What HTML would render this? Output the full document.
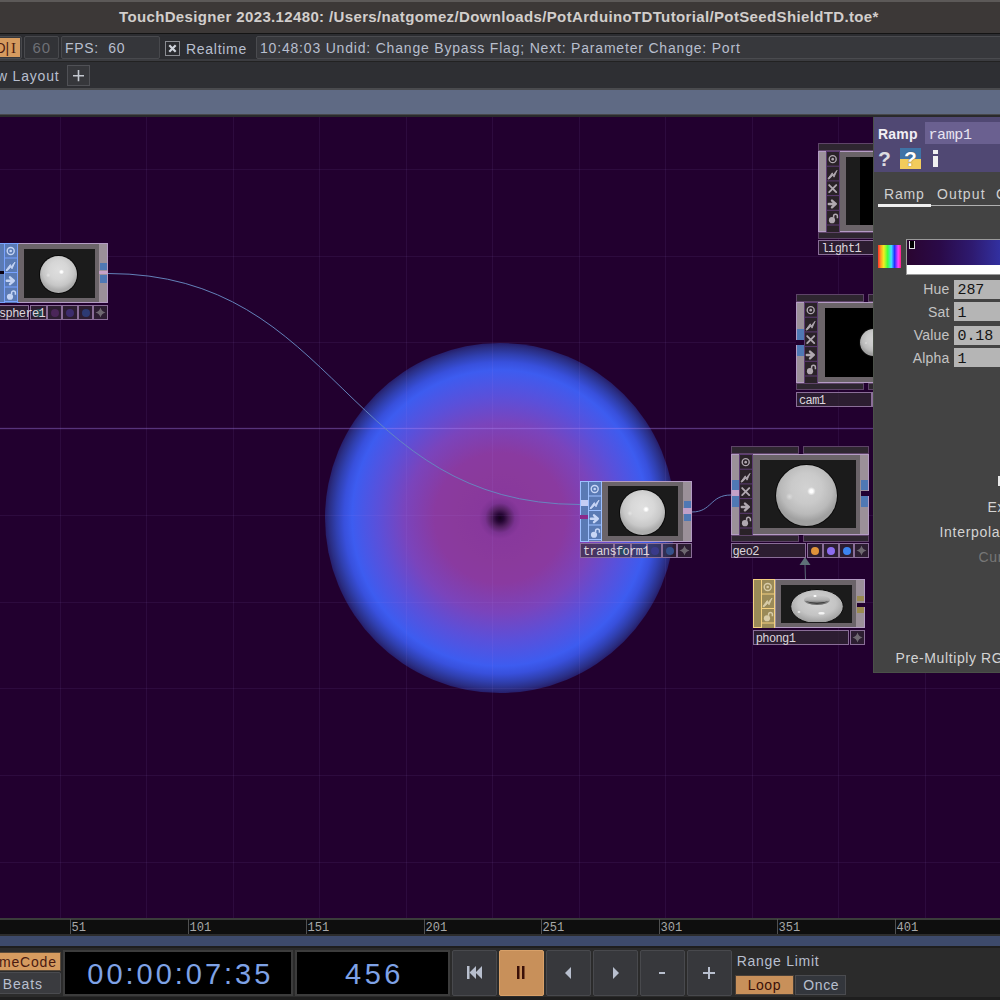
<!DOCTYPE html>
<html><head><meta charset="utf-8">
<style>
*{box-sizing:border-box;margin:0;padding:0}
html,body{width:1000px;height:1000px;overflow:hidden;background:#22002f;font-family:"Liberation Sans",sans-serif}
.a{position:absolute}
.t{white-space:pre;line-height:1}
.m{font-family:"Liberation Mono",monospace}
svg{position:absolute;left:0;top:0;overflow:visible}
</style></head><body>

<div class="a" style="left:325px;top:342.70000000000005px;width:350px;height:350px;border-radius:50%;background:radial-gradient(circle closest-side, #14021c 0px, #260634 4px, #50205e 9px, #7a3290 15px, #88389c 21px, #8a3a9c 45px, #8a3aa0 65px, #7a44bc 95px, #5a50da 122px, #3d5cf0 148px, #3850dc 156px, #3040b0 164px, #2a2e84 171px, #261e6a 175px)"></div>
<svg width="1000" height="1000"><rect x="60" y="117" width="1" height="801" fill="rgba(190,150,255,0.075)"/><rect x="146" y="117" width="1" height="801" fill="rgba(190,150,255,0.075)"/><rect x="233" y="117" width="1" height="801" fill="rgba(190,150,255,0.075)"/><rect x="319" y="117" width="1" height="801" fill="rgba(190,150,255,0.075)"/><rect x="406" y="117" width="1" height="801" fill="rgba(190,150,255,0.075)"/><rect x="492" y="117" width="1" height="801" fill="rgba(190,150,255,0.075)"/><rect x="579" y="117" width="1" height="801" fill="rgba(190,150,255,0.075)"/><rect x="665" y="117" width="1" height="801" fill="rgba(190,150,255,0.075)"/><rect x="752" y="117" width="1" height="801" fill="rgba(190,150,255,0.075)"/><rect x="838" y="117" width="1" height="801" fill="rgba(190,150,255,0.075)"/><rect x="925" y="117" width="1" height="801" fill="rgba(190,150,255,0.075)"/><rect x="0" y="169" width="1000" height="1" fill="rgba(190,150,255,0.075)"/><rect x="0" y="256" width="1000" height="1" fill="rgba(190,150,255,0.075)"/><rect x="0" y="342" width="1000" height="1" fill="rgba(190,150,255,0.075)"/><rect x="0" y="515" width="1000" height="1" fill="rgba(190,150,255,0.075)"/><rect x="0" y="602" width="1000" height="1" fill="rgba(190,150,255,0.075)"/><rect x="0" y="688" width="1000" height="1" fill="rgba(190,150,255,0.075)"/><rect x="0" y="775" width="1000" height="1" fill="rgba(190,150,255,0.075)"/><rect x="0" y="862" width="1000" height="1" fill="rgba(190,150,255,0.075)"/><rect x="0" y="428" width="1000" height="1" fill="rgba(175,135,250,0.34)"/><rect x="0" y="427" width="1000" height="3" fill="rgba(170,130,240,0.06)"/><path d="M108 273.5 C 340 273.5, 345 504.5, 580 504.5" stroke="#6688c0" stroke-width="0.95" fill="none"/><path d="M692 512 C 712 512, 710 495, 731 495" stroke="#6688c0" stroke-width="0.95" fill="none"/><path d="M805.5 580 L805 565" stroke="#5a6a78" stroke-width="1" fill="none"/><path d="M799.5 565 L810.5 565 L805 557 Z" fill="#5e7078"/></svg>
<div class="a" style="left:-30px;top:243px;width:138px;height:60px;background:#9b9099;border:1px solid #b49cc4"></div>
<div class="a" style="left:-30px;top:243px;width:35px;height:60px;background:#5a7ab4;border:1px solid #78a2ff"></div>
<div class="a" style="left:4px;top:243px;width:15px;height:60px;background:#5a7ab4;border:1px solid #78a2ff"></div>
<div class="a" style="left:-2px;top:271px;width:6px;height:3px;background:#0a0010"></div>
<div class="a" style="left:4px;top:243px;width:14px;height:60.0px;background:#5a7ab4;border-left:1px solid #78a2ff;border-right:1px solid #78a2ff"></div>
<svg width="1000" height="1000"><rect x="4" y="243.0" width="14" height="1" fill="#78a2ff"/><circle cx="10.7" cy="251.05" r="3.5" stroke="#c4d4f4" stroke-width="1.4" fill="none"/><circle cx="10.7" cy="251.05" r="1.3" fill="#c4d4f4"/><rect x="4" y="257.5" width="14" height="1" fill="#78a2ff"/><path d="M6 270.25 L10.3 264.55 L11 266.85 L15 262.05 L12 268.85 L11.2 266.65 L7 270.85 Z" fill="#c4d4f4" stroke="#c4d4f4" stroke-width="0.9" stroke-linejoin="round"/><rect x="4" y="272.0" width="14" height="1" fill="#78a2ff"/><path d="M6.8 280.75 L12.5 280.75 M10 277.35 L13.8 280.75 L10 284.15" stroke="#c4d4f4" stroke-width="2.4" stroke-linecap="round" stroke-linejoin="round" fill="none"/><rect x="4" y="286.5" width="14" height="1" fill="#78a2ff"/><circle cx="10" cy="296.75" r="3.1" fill="#c4d4f4"/><path d="M11.6 294.25 L11.6 292.85 A1.9 1.9 0 0 1 15.4 292.85 L15.4 294.85" stroke="#c4d4f4" stroke-width="1.5" fill="none"/><rect x="4" y="301.0" width="14" height="1" fill="#78a2ff"/></svg>
<div class="a" style="left:18px;top:244px;width:81px;height:58px;background:#6b6469"></div>
<div class="a" style="left:24px;top:249px;width:71px;height:49px;background:#1b1b1b"></div>
<div class="a" style="left:39.6px;top:255.50000000000003px;width:37.2px;height:37.2px;border-radius:50%;box-shadow:0 0 0 1px #0a0a0a;background:radial-gradient(circle at 58% 43%, #ffffff 0, #ffffff 0.9300000000000002px, rgba(255,255,255,0) 2.6040000000000005px),radial-gradient(circle at 22% 52%, rgba(255,255,255,0.4) 0, rgba(255,255,255,0) 2.232px),radial-gradient(circle at 50% 38%, #dedede 0, #d6d6d6 9.3px, #c6c6c6 15.81px, #acacac 20.088000000000005px)"></div>
<div class="a" style="left:100px;top:263px;width:7px;height:7px;background:#4f78b4"></div>
<div class="a" style="left:100px;top:275px;width:7px;height:8px;background:#4f78b4"></div>
<div class="a" style="left:99px;top:271px;width:9px;height:3px;background:#c7a2c9"></div>
<div class="a" style="left:-10px;top:305px;width:39px;height:15px;background:rgba(50,44,50,0.66);border:1px solid #8a6e98"></div>
<div class="a" style="left:30px;top:305px;width:17px;height:15px;background:rgba(50,44,50,0.66);border:1px solid #8a6e98"></div>
<div class="a" style="left:34.5px;top:308.5px;width:8px;height:8px;border-radius:50%;background:#244850"></div>
<div class="a" style="left:47px;top:305px;width:15px;height:15px;background:rgba(50,44,50,0.66);border:1px solid #8a6e98"></div>
<div class="a" style="left:50.5px;top:308.5px;width:8px;height:8px;border-radius:50%;background:#4a2658"></div>
<div class="a" style="left:62px;top:305px;width:16px;height:15px;background:rgba(50,44,50,0.66);border:1px solid #8a6e98"></div>
<div class="a" style="left:66.0px;top:308.5px;width:8px;height:8px;border-radius:50%;background:#3c2c6c"></div>
<div class="a" style="left:78px;top:305px;width:15px;height:15px;background:rgba(50,44,50,0.66);border:1px solid #8a6e98"></div>
<div class="a" style="left:81.5px;top:308.5px;width:8px;height:8px;border-radius:50%;background:#2c3a72"></div>
<div class="a" style="left:93px;top:305px;width:15px;height:15px;background:rgba(50,44,50,0.66);border:1px solid #8a6e98"></div>
<svg width="1000" height="1000"><path d="M100.5 307.5 Q101.5 311.5 105.5 312.5 Q101.5 313.5 100.5 317.5 Q99.5 313.5 95.5 312.5 Q99.5 311.5 100.5 307.5 Z" fill="#6e6870"/></svg>
<div class="a" style="left:580px;top:481px;width:112px;height:61px;background:#9b9099;border:1px solid #b49cc4"></div>
<div class="a" style="left:580px;top:481px;width:9px;height:61px;background:#5a7ab4;border:1px solid #9ec0ff"></div>
<div class="a" style="left:581px;top:500px;width:7px;height:6px;background:#c4cdf4"></div>
<div class="a" style="left:580px;top:515px;width:9px;height:4px;background:#8a2a8a"></div>
<div class="a" style="left:588px;top:481px;width:14px;height:60.0px;background:#5a7ab4;border-left:1px solid #9ec0ff;border-right:1px solid #9ec0ff"></div>
<svg width="1000" height="1000"><rect x="588" y="481.0" width="14" height="1" fill="#9ec0ff"/><circle cx="594.7" cy="489.05" r="3.5" stroke="#c8d6f6" stroke-width="1.4" fill="none"/><circle cx="594.7" cy="489.05" r="1.3" fill="#c8d6f6"/><rect x="588" y="495.5" width="14" height="1" fill="#9ec0ff"/><path d="M590 508.25 L594.3 502.55 L595 504.85 L599 500.05 L596 506.85 L595.2 504.65 L591 508.85 Z" fill="#c8d6f6" stroke="#c8d6f6" stroke-width="0.9" stroke-linejoin="round"/><rect x="588" y="510.0" width="14" height="1" fill="#9ec0ff"/><path d="M590.8 518.75 L596.5 518.75 M594 515.35 L597.8 518.75 L594 522.15" stroke="#c8d6f6" stroke-width="2.4" stroke-linecap="round" stroke-linejoin="round" fill="none"/><rect x="588" y="524.5" width="14" height="1" fill="#9ec0ff"/><circle cx="594" cy="534.75" r="3.1" fill="#c8d6f6"/><path d="M595.6 532.25 L595.6 530.85 A1.9 1.9 0 0 1 599.4 530.85 L599.4 532.85" stroke="#c8d6f6" stroke-width="1.5" fill="none"/><rect x="588" y="539.0" width="14" height="1" fill="#9ec0ff"/></svg>
<div class="a" style="left:602px;top:482px;width:81px;height:59px;background:#6b6469"></div>
<div class="a" style="left:608px;top:486px;width:70px;height:50px;background:#1b1b1b"></div>
<div class="a" style="left:619.7px;top:489.70000000000005px;width:45.0px;height:45.0px;border-radius:50%;box-shadow:0 0 0 1px #0a0a0a;background:radial-gradient(circle at 58% 43%, #ffffff 0, #ffffff 1.125px, rgba(255,255,255,0) 3.1500000000000004px),radial-gradient(circle at 22% 52%, rgba(255,255,255,0.4) 0, rgba(255,255,255,0) 2.6999999999999997px),radial-gradient(circle at 50% 38%, #e0e0e0 0, #d8d8d8 11.25px, #c8c8c8 19.125px, #aeaeae 24.3px)"></div>
<div class="a" style="left:684px;top:501px;width:7px;height:7px;background:#4f78b4"></div>
<div class="a" style="left:683px;top:508px;width:9px;height:6px;background:#c0a0c8"></div>
<div class="a" style="left:684px;top:514px;width:7px;height:7px;background:#4f78b4"></div>
<div class="a" style="left:580px;top:543px;width:34px;height:15px;background:rgba(50,44,50,0.66);border:1px solid #8a6e98"></div>
<div class="a" style="left:614px;top:543px;width:17px;height:15px;background:rgba(50,44,50,0.66);border:1px solid #8a6e98"></div>
<div class="a" style="left:618.5px;top:546.5px;width:8px;height:8px;border-radius:50%;background:#2a4a62"></div>
<div class="a" style="left:631px;top:543px;width:16px;height:15px;background:rgba(50,44,50,0.66);border:1px solid #8a6e98"></div>
<div class="a" style="left:635.0px;top:546.5px;width:8px;height:8px;border-radius:50%;background:#3a3270"></div>
<div class="a" style="left:647px;top:543px;width:15px;height:15px;background:rgba(50,44,50,0.66);border:1px solid #8a6e98"></div>
<div class="a" style="left:650.5px;top:546.5px;width:8px;height:8px;border-radius:50%;background:#3a3a8a"></div>
<div class="a" style="left:662px;top:543px;width:15px;height:15px;background:rgba(50,44,50,0.66);border:1px solid #8a6e98"></div>
<div class="a" style="left:665.5px;top:546.5px;width:8px;height:8px;border-radius:50%;background:#34508a"></div>
<div class="a" style="left:677px;top:543px;width:15px;height:15px;background:rgba(50,44,50,0.66);border:1px solid #8a6e98"></div>
<svg width="1000" height="1000"><path d="M684.5 545.5 Q685.5 549.5 689.5 550.5 Q685.5 551.5 684.5 555.5 Q683.5 551.5 679.5 550.5 Q683.5 549.5 684.5 545.5 Z" fill="#6e6870"/></svg>
<div class="a t" style="left:-1px;top:308px;font-family:Liberation Mono;font-size:12px;letter-spacing:-0.6px;color:#ddd6dd">sphere1</div>
<div class="a t" style="left:583px;top:546px;font-family:Liberation Mono;font-size:12px;letter-spacing:-0.6px;color:#ddd6dd">transform1</div>
<div class="a" style="left:731px;top:446px;width:68px;height:8px;background:#2e2630;border:1px solid #5e4468"></div>
<div class="a" style="left:803px;top:446px;width:66px;height:8px;background:#2e2630;border:1px solid #5e4468"></div>
<div class="a" style="left:731px;top:535px;width:68px;height:7px;background:#2e2630;border:1px solid #5e4468"></div>
<div class="a" style="left:803px;top:535px;width:66px;height:7px;background:#2e2630;border:1px solid #5e4468"></div>
<div class="a" style="left:731px;top:454px;width:138px;height:81px;background:#9b9099;border:1px solid #b49cc4"></div>
<div class="a" style="left:732px;top:480px;width:7px;height:10px;background:#4f78b4"></div>
<div class="a" style="left:732px;top:490px;width:7px;height:6px;background:#c4a0c8"></div>
<div class="a" style="left:732px;top:496px;width:7px;height:11px;background:#4f78b4"></div>
<div class="a" style="left:739px;top:454px;width:14px;height:80.5px;background:#2a2228;border-left:1px solid #5c3c72;border-right:1px solid #5c3c72"></div>
<svg width="1000" height="1000"><rect x="739" y="454.0" width="14" height="1" fill="#5c3c72"/><circle cx="745.7" cy="462.15000000000003" r="3.5" stroke="#b0a8b0" stroke-width="1.4" fill="none"/><circle cx="745.7" cy="462.15000000000003" r="1.3" fill="#b0a8b0"/><rect x="739" y="468.7" width="14" height="1" fill="#5c3c72"/><path d="M741 481.55 L745.3 475.85 L746 478.15000000000003 L750 473.35 L747 480.15000000000003 L746.2 477.95 L742 482.15000000000003 Z" fill="#b0a8b0" stroke="#b0a8b0" stroke-width="0.9" stroke-linejoin="round"/><rect x="739" y="483.4" width="14" height="1" fill="#5c3c72"/><path d="M742.2 488.05 L749.2 495.05 M749.2 488.05 L742.2 495.05" stroke="#b0a8b0" stroke-width="1.9" stroke-linecap="round" fill="none"/><rect x="739" y="498.1" width="14" height="1" fill="#5c3c72"/><path d="M741.8 506.95000000000005 L747.5 506.95000000000005 M745 503.55000000000007 L748.8 506.95000000000005 L745 510.35" stroke="#b0a8b0" stroke-width="2.4" stroke-linecap="round" stroke-linejoin="round" fill="none"/><rect x="739" y="512.8" width="14" height="1" fill="#5c3c72"/><circle cx="745" cy="523.15" r="3.1" fill="#b0a8b0"/><path d="M746.6 520.65 L746.6 519.25 A1.9 1.9 0 0 1 750.4 519.25 L750.4 521.25" stroke="#b0a8b0" stroke-width="1.5" fill="none"/><rect x="739" y="527.5" width="14" height="1" fill="#5c3c72"/></svg>
<div class="a" style="left:753px;top:455px;width:107px;height:79px;background:#6b6469"></div>
<div class="a" style="left:760px;top:460px;width:96px;height:68px;background:#1b1b1b"></div>
<div class="a" style="left:775.5px;top:464.5px;width:61.0px;height:61.0px;border-radius:50%;box-shadow:0 0 0 1px #0a0a0a;background:radial-gradient(circle at 58% 43%, #ffffff 0, #ffffff 1.5250000000000001px, rgba(255,255,255,0) 4.2700000000000005px),radial-gradient(circle at 22% 52%, rgba(255,255,255,0.4) 0, rgba(255,255,255,0) 3.6599999999999997px),radial-gradient(circle at 50% 38%, #d2d2d2 0, #cacaca 15.25px, #bababa 25.925px, #a0a0a0 32.940000000000005px)"></div>
<div class="a" style="left:861px;top:480px;width:7px;height:10px;background:#4f78b4"></div>
<div class="a" style="left:861px;top:491px;width:9px;height:5px;background:#22002f"></div>
<div class="a" style="left:861px;top:496px;width:7px;height:11px;background:#4f78b4"></div>
<div class="a" style="left:731px;top:543px;width:75px;height:15px;background:rgba(50,44,50,0.66);border:1px solid #8a6e98"></div>
<div class="a" style="left:807px;top:543px;width:16px;height:15px;background:rgba(50,44,50,0.66);border:1px solid #8a6e98"></div>
<div class="a" style="left:811.0px;top:546.5px;width:8px;height:8px;border-radius:50%;background:#e0943a"></div>
<div class="a" style="left:823px;top:543px;width:16px;height:15px;background:rgba(50,44,50,0.66);border:1px solid #8a6e98"></div>
<div class="a" style="left:827.0px;top:546.5px;width:8px;height:8px;border-radius:50%;background:#8c6cf0"></div>
<div class="a" style="left:839px;top:543px;width:15px;height:15px;background:rgba(50,44,50,0.66);border:1px solid #8a6e98"></div>
<div class="a" style="left:842.5px;top:546.5px;width:8px;height:8px;border-radius:50%;background:#3c84f0"></div>
<div class="a" style="left:854px;top:543px;width:15px;height:15px;background:rgba(50,44,50,0.66);border:1px solid #8a6e98"></div>
<svg width="1000" height="1000"><path d="M861.5 545.5 Q862.5 549.5 866.5 550.5 Q862.5 551.5 861.5 555.5 Q860.5 551.5 856.5 550.5 Q860.5 549.5 861.5 545.5 Z" fill="#6e6870"/></svg>
<div class="a t" style="left:732.5px;top:546px;font-family:Liberation Mono;font-size:12px;letter-spacing:-0.6px;color:#ddd6dd">geo2</div>
<div class="a" style="left:753px;top:579px;width:112px;height:49px;background:#9b9099;border:1px solid #b49cc4"></div>
<div class="a" style="left:753px;top:579px;width:9px;height:49px;background:#9a8a58;border:1px solid #f4d080"></div>
<div class="a" style="left:761px;top:579px;width:14px;height:48.5px;background:#9a8a58;border-left:1px solid #f4d080;border-right:1px solid #f4d080"></div>
<svg width="1000" height="1000"><rect x="761" y="579.0" width="14" height="1" fill="#f4d080"/><circle cx="767.7" cy="587.05" r="3.5" stroke="#d8cca8" stroke-width="1.4" fill="none"/><circle cx="767.7" cy="587.05" r="1.3" fill="#d8cca8"/><rect x="761" y="593.5" width="14" height="1" fill="#f4d080"/><path d="M763 606.25 L767.3 600.55 L768 602.85 L772 598.05 L769 604.85 L768.2 602.65 L764 606.85 Z" fill="#d8cca8" stroke="#d8cca8" stroke-width="0.9" stroke-linejoin="round"/><rect x="761" y="608.0" width="14" height="1" fill="#f4d080"/><circle cx="767" cy="618.25" r="3.1" fill="#d8cca8"/><path d="M768.6 615.75 L768.6 614.35 A1.9 1.9 0 0 1 772.4 614.35 L772.4 616.35" stroke="#d8cca8" stroke-width="1.5" fill="none"/><rect x="761" y="622.5" width="14" height="1" fill="#f4d080"/></svg>
<div class="a" style="left:776px;top:580px;width:80px;height:47px;background:#6b6469"></div>
<div class="a" style="left:781px;top:585px;width:71px;height:38px;background:#1b1b1b"></div>
<svg width="1000" height="1000"><defs><radialGradient id="tg" cx="0.5" cy="0.4" r="0.6"><stop offset="0" stop-color="#d4d4d4"/><stop offset="0.6" stop-color="#c4c4c4"/><stop offset="1" stop-color="#9a9a9a"/></radialGradient><linearGradient id="th" x1="0" y1="0" x2="0" y2="1"><stop offset="0" stop-color="#c8c8c8"/><stop offset="0.5" stop-color="#b0b0b0"/><stop offset="0.85" stop-color="#707070"/><stop offset="1" stop-color="#404040"/></linearGradient><clipPath id="tc"><rect x="781" y="585" width="71" height="37"/></clipPath></defs><g clip-path="url(#tc)"><ellipse cx="817" cy="606.5" rx="26.3" ry="17" fill="url(#tg)" stroke="#0a0a0a" stroke-width="1"/><ellipse cx="817" cy="600" rx="13" ry="4.8" fill="url(#th)"/><path d="M804.5 601 Q817 606.5 829.5 601 Q817 604.3 804.5 601 Z" fill="#303030"/><ellipse cx="815" cy="596" rx="1.6" ry="1.1" fill="#fff"/><ellipse cx="821.5" cy="613.3" rx="3.2" ry="1.3" fill="#f4f4f4"/><ellipse cx="799" cy="612" rx="1.4" ry="1" fill="#e8e8e8"/></g></svg>
<div class="a" style="left:857px;top:596px;width:7px;height:5px;background:#9a8a50"></div>
<div class="a" style="left:857px;top:603px;width:9px;height:4px;background:#22002f"></div>
<div class="a" style="left:857px;top:607px;width:7px;height:6px;background:#9a8a50"></div>
<div class="a" style="left:753px;top:630px;width:96px;height:15px;background:rgba(50,44,50,0.66);border:1px solid #8a6e98"></div>
<div class="a" style="left:850px;top:630px;width:15px;height:15px;background:rgba(50,44,50,0.66);border:1px solid #8a6e98"></div>
<svg width="1000" height="1000"><path d="M857.5 632.5 Q858.5 636.5 862.5 637.5 Q858.5 638.5 857.5 642.5 Q856.5 638.5 852.5 637.5 Q856.5 636.5 857.5 632.5 Z" fill="#6e6870"/></svg>
<div class="a t" style="left:755.7px;top:633px;font-family:Liberation Mono;font-size:12px;letter-spacing:-0.6px;color:#ddd6dd">phong1</div>
<div class="a" style="left:818px;top:143px;width:60px;height:8px;background:#2e2630;border:1px solid #5e4468"></div>
<div class="a" style="left:818px;top:232px;width:60px;height:7px;background:#2e2630;border:1px solid #5e4468"></div>
<div class="a" style="left:818px;top:151px;width:60px;height:81px;background:#9b9099;border:1px solid #b49cc4"></div>
<div class="a" style="left:826px;top:151px;width:14px;height:80.5px;background:#2a2228;border-left:1px solid #5c3c72;border-right:1px solid #5c3c72"></div>
<svg width="1000" height="1000"><rect x="826" y="151.0" width="14" height="1" fill="#5c3c72"/><circle cx="832.7" cy="159.15" r="3.5" stroke="#b0a8b0" stroke-width="1.4" fill="none"/><circle cx="832.7" cy="159.15" r="1.3" fill="#b0a8b0"/><rect x="826" y="165.7" width="14" height="1" fill="#5c3c72"/><path d="M828 178.54999999999998 L832.3 172.85 L833 175.14999999999998 L837 170.35 L834 177.14999999999998 L833.2 174.95 L829 179.14999999999998 Z" fill="#b0a8b0" stroke="#b0a8b0" stroke-width="0.9" stroke-linejoin="round"/><rect x="826" y="180.4" width="14" height="1" fill="#5c3c72"/><path d="M829.2 185.05 L836.2 192.05 M836.2 185.05 L829.2 192.05" stroke="#b0a8b0" stroke-width="1.9" stroke-linecap="round" fill="none"/><rect x="826" y="195.1" width="14" height="1" fill="#5c3c72"/><path d="M828.8 203.95 L834.5 203.95 M832 200.54999999999998 L835.8 203.95 L832 207.35" stroke="#b0a8b0" stroke-width="2.4" stroke-linecap="round" stroke-linejoin="round" fill="none"/><rect x="826" y="209.8" width="14" height="1" fill="#5c3c72"/><circle cx="832" cy="220.15" r="3.1" fill="#b0a8b0"/><path d="M833.6 217.65 L833.6 216.25 A1.9 1.9 0 0 1 837.4 216.25 L837.4 218.25" stroke="#b0a8b0" stroke-width="1.5" fill="none"/><rect x="826" y="224.5" width="14" height="1" fill="#5c3c72"/></svg>
<div class="a" style="left:840px;top:152px;width:40px;height:79px;background:#6b6469"></div>
<div class="a" style="left:846px;top:157px;width:30px;height:68px;background:#1c1c1c"></div>
<div class="a" style="left:860px;top:157px;width:20px;height:68px;background:#000"></div>
<div class="a" style="left:818px;top:240px;width:60px;height:15px;background:rgba(50,44,50,0.66);border:1px solid #8a6e98"></div>
<div class="a t" style="left:821.5px;top:243px;font-family:Liberation Mono;font-size:12px;letter-spacing:-0.6px;color:#ddd6dd">light1</div>
<div class="a" style="left:796px;top:294px;width:68px;height:8px;background:#2e2630;border:1px solid #5e4468"></div>
<div class="a" style="left:868px;top:294px;width:10px;height:8px;background:#2e2630;border:1px solid #5e4468"></div>
<div class="a" style="left:796px;top:383px;width:68px;height:7px;background:#2e2630;border:1px solid #5e4468"></div>
<div class="a" style="left:868px;top:383px;width:10px;height:7px;background:#2e2630;border:1px solid #5e4468"></div>
<div class="a" style="left:796px;top:302px;width:82px;height:81px;background:#9b9099;border:1px solid #b49cc4"></div>
<div class="a" style="left:797px;top:329px;width:7px;height:11px;background:#4f78b4"></div>
<div class="a" style="left:796px;top:340px;width:9px;height:5px;background:#22002f"></div>
<div class="a" style="left:797px;top:345px;width:7px;height:11px;background:#4f78b4"></div>
<div class="a" style="left:804px;top:302px;width:14px;height:80.5px;background:#2a2228;border-left:1px solid #5c3c72;border-right:1px solid #5c3c72"></div>
<svg width="1000" height="1000"><rect x="804" y="302.0" width="14" height="1" fill="#5c3c72"/><circle cx="810.7" cy="310.15000000000003" r="3.5" stroke="#b0a8b0" stroke-width="1.4" fill="none"/><circle cx="810.7" cy="310.15000000000003" r="1.3" fill="#b0a8b0"/><rect x="804" y="316.7" width="14" height="1" fill="#5c3c72"/><path d="M806 329.55 L810.3 323.85 L811 326.15000000000003 L815 321.35 L812 328.15000000000003 L811.2 325.95 L807 330.15000000000003 Z" fill="#b0a8b0" stroke="#b0a8b0" stroke-width="0.9" stroke-linejoin="round"/><rect x="804" y="331.4" width="14" height="1" fill="#5c3c72"/><path d="M807.2 336.05 L814.2 343.05 M814.2 336.05 L807.2 343.05" stroke="#b0a8b0" stroke-width="1.9" stroke-linecap="round" fill="none"/><rect x="804" y="346.1" width="14" height="1" fill="#5c3c72"/><path d="M806.8 354.95000000000005 L812.5 354.95000000000005 M810 351.55000000000007 L813.8 354.95000000000005 L810 358.35" stroke="#b0a8b0" stroke-width="2.4" stroke-linecap="round" stroke-linejoin="round" fill="none"/><rect x="804" y="360.8" width="14" height="1" fill="#5c3c72"/><circle cx="810" cy="371.15000000000003" r="3.1" fill="#b0a8b0"/><path d="M811.6 368.65000000000003 L811.6 367.25000000000006 A1.9 1.9 0 0 1 815.4 367.25000000000006 L815.4 369.25000000000006" stroke="#b0a8b0" stroke-width="1.5" fill="none"/><rect x="804" y="375.5" width="14" height="1" fill="#5c3c72"/></svg>
<div class="a" style="left:818px;top:303px;width:60px;height:79px;background:#6b6469"></div>
<div class="a" style="left:825px;top:308px;width:55px;height:69px;background:#000"></div>
<div class="a" style="left:859.5px;top:328.5px;width:27.0px;height:27.0px;border-radius:50%;box-shadow:0 0 0 1px #0a0a0a;background:radial-gradient(circle at 58% 43%, #ffffff 0, #ffffff 0.675px, rgba(255,255,255,0) 1.8900000000000001px),radial-gradient(circle at 22% 52%, rgba(255,255,255,0.4) 0, rgba(255,255,255,0) 1.6199999999999999px),radial-gradient(circle at 50% 38%, #d2d2d2 0, #cacaca 6.75px, #bababa 11.475px, #a0a0a0 14.580000000000002px)"></div>
<div class="a" style="left:796px;top:392px;width:76px;height:15px;background:rgba(50,44,50,0.66);border:1px solid #8a6e98"></div>
<div class="a" style="left:872px;top:392px;width:5px;height:15px;background:rgba(50,44,50,0.66);border:1px solid #8a6e98"></div>
<div class="a t" style="left:799px;top:395px;font-family:Liberation Mono;font-size:12px;letter-spacing:-0.6px;color:#ddd6dd">cam1</div>
<div class="a" style="left:873px;top:117px;width:127px;height:556px;background:#434343;border-left:1px solid #4a5048;border-bottom:1px solid #4a5048"></div>
<div class="a" style="left:874px;top:117px;width:126px;height:55px;background:#504873"></div>
<div class="a t" style="left:878px;top:127px;font-weight:bold;font-size:14px;letter-spacing:0.2px;color:#f0eef4">Ramp</div>
<div class="a" style="left:925px;top:122px;width:75px;height:22px;background:#6a6090"></div>
<div class="a t" style="left:928.5px;top:127.5px;font-family:Liberation Mono;font-size:15px;letter-spacing:-0.4px;color:#e8e4f0">ramp1</div>
<div class="a t" style="left:878px;top:148px;font-weight:bold;font-size:21px;color:#dcdce0">?</div>
<div class="a" style="left:900px;top:148px;width:21px;height:21px;background:linear-gradient(#3f73a6 0,#3f73a6 50%,#f2cc5c 50%,#f2cc5c 100%)"></div>
<div class="a t" style="left:904px;top:148px;font-weight:bold;font-size:21px;color:#ffffff;text-shadow:0 0 1px #333">?</div>
<div class="a" style="left:933px;top:150px;width:5px;height:4px;background:#f0f0f0"></div>
<div class="a" style="left:933px;top:156px;width:5px;height:11px;background:#f0f0f0"></div>
<div class="a t" style="left:884px;top:187px;font-size:14px;letter-spacing:0.8px;color:#d0d0d0">Ramp</div>
<div class="a t" style="left:937px;top:187px;font-size:14px;letter-spacing:1.1px;color:#d0d0d0">Output</div>
<div class="a t" style="left:996px;top:187px;font-size:14px;color:#d0d0d0">C</div>
<div class="a" style="left:878px;top:205px;width:122px;height:1px;background:#b0b0b0"></div>
<div class="a" style="left:878px;top:204px;width:53px;height:3px;background:#f0f0f0"></div>
<div class="a" style="left:878px;top:245px;width:23px;height:23px;background:linear-gradient(90deg,#ff3030 0,#ff9a20 12%,#f0f020 25%,#40ff40 42%,#40e0ff 58%,#2030ff 72%,#ff40ff 88%,#ff2080 100%)"></div>
<div class="a" style="left:906px;top:239px;width:94px;height:36px;background:#fff;border:1px solid #9a9a9a;border-right:none"></div>
<div class="a" style="left:907px;top:240px;width:93px;height:25px;background:linear-gradient(90deg,#2a0530 0%,#2a0a48 35%,#2e1a70 70%,#3230a0 100%)"></div>
<div class="a" style="left:909px;top:241px;width:6px;height:8px;background:#000;border:1px solid #e0e0e0;border-top:none"></div>
<div class="a" style="left:954px;top:280px;width:46px;height:19px;background:#b5b5b5"></div>
<div class="a t" style="right:50.5px;top:282.0px;font-size:14px;letter-spacing:0.2px;color:#c4c4c4">Hue</div>
<div class="a t" style="left:957.5px;top:283.0px;font-family:Liberation Mono;font-size:15px;letter-spacing:-0.1px;color:#141414">287</div>
<div class="a" style="left:954px;top:302px;width:46px;height:19px;background:#b5b5b5"></div>
<div class="a t" style="right:50.5px;top:305.0px;font-size:14px;letter-spacing:0.2px;color:#c4c4c4">Sat</div>
<div class="a t" style="left:957.5px;top:306.0px;font-family:Liberation Mono;font-size:15px;letter-spacing:-0.1px;color:#141414">1</div>
<div class="a" style="left:954px;top:326px;width:46px;height:19px;background:#b5b5b5"></div>
<div class="a t" style="right:50.5px;top:328.0px;font-size:14px;letter-spacing:0.2px;color:#c4c4c4">Value</div>
<div class="a t" style="left:957.5px;top:329.0px;font-family:Liberation Mono;font-size:15px;letter-spacing:-0.1px;color:#141414">0.18</div>
<div class="a" style="left:954px;top:348px;width:46px;height:19px;background:#b5b5b5"></div>
<div class="a t" style="right:50.5px;top:351.0px;font-size:14px;letter-spacing:0.2px;color:#c4c4c4">Alpha</div>
<div class="a t" style="left:957.5px;top:352.0px;font-family:Liberation Mono;font-size:15px;letter-spacing:-0.1px;color:#141414">1</div>
<div class="a" style="left:998px;top:476px;width:2px;height:10px;background:#e8e8e8"></div>
<div class="a t" style="left:987.5px;top:500px;font-size:14px;letter-spacing:0.7px;color:#d4d4d4">Ex</div>
<div class="a t" style="left:939.5px;top:525px;font-size:14px;letter-spacing:0.7px;color:#d4d4d4">Interpola</div>
<div class="a t" style="left:978.5px;top:550px;font-size:14px;letter-spacing:0.7px;color:#777">Cur</div>
<div class="a t" style="left:895.5px;top:651px;font-size:14px;letter-spacing:0.6px;color:#d4d4d4">Pre-Multiply RG</div>
<div class="a" style="left:0px;top:0px;width:1000px;height:33px;background:#3c3837;border-top:2px solid #5c5958"></div>
<div class="a t" style="left:119px;top:9px;font-weight:bold;font-size:15px;letter-spacing:0.36px;color:#d2cecc">TouchDesigner 2023.12480: /Users/natgomez/Downloads/PotArduinoTDTutorial/PotSeedShieldTD.toe*</div>
<div class="a" style="left:0px;top:33px;width:1000px;height:1px;background:#141414"></div>
<div class="a" style="left:0px;top:34px;width:1000px;height:27px;background:#2c2d31"></div>
<div class="a" style="left:-4px;top:36px;width:26px;height:23px;background:#35363a;border:1px solid #48494d;border-radius:2px"></div>
<div class="a" style="left:0px;top:38px;width:20px;height:19px;background:#d69b5f"></div>
<div class="a t" style="left:-4.5px;top:41px;font-size:14px;color:#4a1a10">D|</div>
<div class="a t" style="left:11px;top:41px;font-family:Liberation Serif;font-size:15px;color:#4a1a10">I</div>
<div class="a" style="left:24px;top:36px;width:35px;height:23px;background:#323337;border:1px solid #48494d;border-radius:2px"></div>
<div class="a t" style="left:32.5px;top:40px;font-size:15px;letter-spacing:1px;color:#6e7076">60</div>
<div class="a" style="left:61px;top:36px;width:99px;height:23px;background:#35363a;border:1px solid #48494d;border-radius:2px"></div>
<div class="a t" style="left:65px;top:41px;font-size:14px;letter-spacing:0.71px;color:#b8bfce">FPS:  60</div>
<div class="a" style="left:165px;top:41px;width:15px;height:15px;background:#2a2b2f;border:1px solid #8a8c92"></div>
<svg width="1000" height="1000"><path d="M169.3 45.3 L175.7 51.7 M175.7 45.3 L169.3 51.7" stroke="#d0d4dc" stroke-width="2.2"/></svg>
<div class="a t" style="left:186px;top:42px;font-size:14px;letter-spacing:0.71px;color:#b8bfce">Realtime</div>
<div class="a" style="left:256px;top:36px;width:760px;height:23px;background:#37383c;border:1px solid #4a4b4f;border-radius:2px"></div>
<div class="a t" style="left:260px;top:41px;font-size:14px;letter-spacing:0.81px;color:#b8bfce">10:48:03 Undid: Change Bypass Flag; Next: Parameter Change: Port</div>
<div class="a" style="left:0px;top:59px;width:1000px;height:3px;background:#3b3c40;border-bottom:1px solid #222"></div>
<div class="a" style="left:0px;top:62px;width:1000px;height:26px;background:#2e2f33"></div>
<div class="a t" style="left:-3px;top:69px;font-size:14px;letter-spacing:0.8px;color:#b8bfce">w Layout</div>
<div class="a" style="left:67px;top:65px;width:23px;height:21px;background:#36373b;border:1px solid #505156"></div>
<svg width="1000" height="1000"><path d="M73 75.7 L84 75.7 M78.5 70 L78.5 81.3" stroke="#c4c8d0" stroke-width="1.6"/></svg>
<div class="a" style="left:0px;top:88px;width:1000px;height:2px;background:#4a4b4e"></div>
<div class="a" style="left:0px;top:90px;width:1000px;height:24px;background:#5f6a84"></div>
<div class="a" style="left:0px;top:114px;width:1000px;height:3px;background:#2a2a2c;border-top:1px solid #47484c"></div>
<div class="a" style="left:0px;top:918px;width:1000px;height:2px;background:#3a3c3a"></div>
<div class="a" style="left:0px;top:920px;width:1000px;height:14px;background:#0e0e0e"></div>
<div class="a" style="left:70px;top:919px;width:1px;height:16px;background:#505050"></div>
<div class="a t" style="left:71.5px;top:921.5px;font-family:Liberation Mono;font-size:12px;color:#a8a8a8">51</div>
<div class="a" style="left:188px;top:919px;width:1px;height:16px;background:#505050"></div>
<div class="a t" style="left:189.5px;top:921.5px;font-family:Liberation Mono;font-size:12px;color:#a8a8a8">101</div>
<div class="a" style="left:306px;top:919px;width:1px;height:16px;background:#505050"></div>
<div class="a t" style="left:307.5px;top:921.5px;font-family:Liberation Mono;font-size:12px;color:#a8a8a8">151</div>
<div class="a" style="left:424px;top:919px;width:1px;height:16px;background:#505050"></div>
<div class="a t" style="left:425.5px;top:921.5px;font-family:Liberation Mono;font-size:12px;color:#a8a8a8">201</div>
<div class="a" style="left:541px;top:919px;width:1px;height:16px;background:#505050"></div>
<div class="a t" style="left:542.5px;top:921.5px;font-family:Liberation Mono;font-size:12px;color:#a8a8a8">251</div>
<div class="a" style="left:659px;top:919px;width:1px;height:16px;background:#505050"></div>
<div class="a t" style="left:660.5px;top:921.5px;font-family:Liberation Mono;font-size:12px;color:#a8a8a8">301</div>
<div class="a" style="left:777px;top:919px;width:1px;height:16px;background:#505050"></div>
<div class="a t" style="left:778.5px;top:921.5px;font-family:Liberation Mono;font-size:12px;color:#a8a8a8">351</div>
<div class="a" style="left:895px;top:919px;width:1px;height:16px;background:#505050"></div>
<div class="a t" style="left:896.5px;top:921.5px;font-family:Liberation Mono;font-size:12px;color:#a8a8a8">401</div>
<div class="a" style="left:0px;top:934px;width:1000px;height:2px;background:#2c2c2c"></div>
<div class="a" style="left:0px;top:936px;width:1000px;height:10px;background:#3d4a6b"></div>
<div class="a" style="left:0px;top:946px;width:1000px;height:54px;background:#2b2b2b;border-top:2px solid #1e1e1e"></div>
<div class="a" style="left:-5px;top:952px;width:66px;height:19px;background:#d69b5f;border:1px solid #5a4a3a"></div>
<div class="a t" style="left:-1px;top:955px;font-size:14px;letter-spacing:0.8px;color:#4a1a10">meCode</div>
<div class="a" style="left:-5px;top:972px;width:66px;height:22px;background:#3a3b3f;border:1px solid #4a4b4f;border-radius:2px"></div>
<div class="a t" style="left:2.7px;top:976.5px;font-size:14px;letter-spacing:0.87px;color:#b8bfce">Beats</div>
<div class="a" style="left:63px;top:950px;width:230px;height:46px;background:#000;border:2px solid #3c3c3c"></div>
<div class="a t" style="left:87.3px;top:959.7px;font-size:29px;letter-spacing:2.98px;color:#7ea2e6">00:00:07:35</div>
<div class="a" style="left:295px;top:950px;width:155px;height:46px;background:#000;border:2px solid #3c3c3c"></div>
<div class="a t" style="left:345px;top:960.4px;font-size:29px;letter-spacing:3.5px;color:#7ea2e6">456</div>
<div class="a" style="left:452px;top:950px;width:45px;height:46px;background:#37383c;border:1px solid #48494d;border-radius:2px"></div>
<div class="a" style="left:499px;top:950px;width:45px;height:46px;background:#c8905a;border:1px solid #d8a068;border-radius:2px"></div>
<div class="a" style="left:546px;top:950px;width:45px;height:46px;background:#37383c;border:1px solid #48494d;border-radius:2px"></div>
<div class="a" style="left:593px;top:950px;width:45px;height:46px;background:#37383c;border:1px solid #48494d;border-radius:2px"></div>
<div class="a" style="left:640px;top:950px;width:45px;height:46px;background:#37383c;border:1px solid #48494d;border-radius:2px"></div>
<div class="a" style="left:687px;top:950px;width:45px;height:46px;background:#37383c;border:1px solid #48494d;border-radius:2px"></div>
<svg width="1000" height="1000"><rect x="467" y="966" width="2.5" height="13" fill="#b8bfce"/><path d="M476 966 L469.5 972.5 L476 979 Z M482 966 L475.5 972.5 L482 979 Z" fill="#b8bfce"/><rect x="517" y="966" width="2.5" height="13" fill="#3a1008"/><rect x="522" y="966" width="2.5" height="13" fill="#3a1008"/><path d="M571 967 L565 973 L571 979 Z" fill="#b8bfce"/><path d="M613 967 L619 973 L613 979 Z" fill="#b8bfce"/><rect x="659" y="972" width="6" height="2" fill="#b8bfce"/><rect x="703" y="972" width="12" height="2" fill="#b8bfce"/><rect x="708" y="967" width="2" height="12" fill="#b8bfce"/></svg>
<div class="a t" style="left:736.7px;top:953.7px;font-size:14px;letter-spacing:0.73px;color:#b8bfce">Range Limit</div>
<div class="a" style="left:735px;top:975px;width:59px;height:20px;background:#c8905a;border:1px solid #4a4038"></div>
<div class="a t" style="left:747.8px;top:978.2px;font-size:14px;letter-spacing:0.5px;color:#3a1008">Loop</div>
<div class="a" style="left:795px;top:975px;width:51px;height:20px;background:#33363c;border:1px solid #4a4b4f"></div>
<div class="a t" style="left:803.3px;top:978.2px;font-size:14px;letter-spacing:0.6px;color:#b8bfce">Once</div>
<div class="a" style="left:0px;top:997px;width:1000px;height:3px;background:#1e1e1e"></div>
</body></html>
